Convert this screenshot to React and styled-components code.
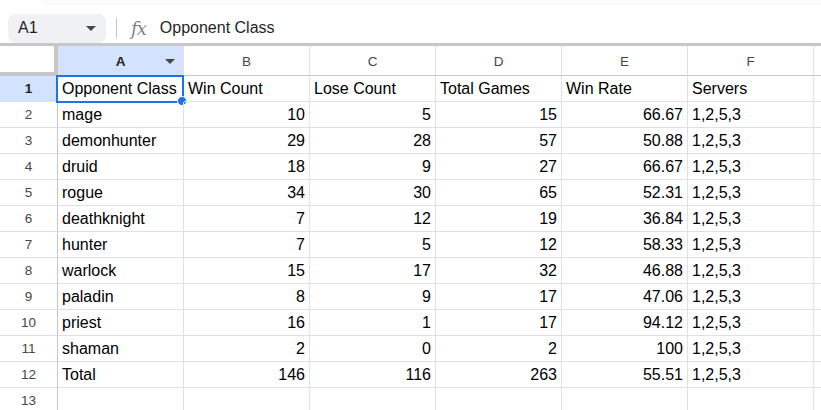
import React from 'react';
import styled, { createGlobalStyle } from 'styled-components';

const GlobalStyle = createGlobalStyle`
  html, body {
    margin: 0;
    padding: 0;
    background: #fff;
    overflow: hidden;
  }
  body {
    font-family: "Liberation Sans", Arial, sans-serif;
    color: #1f1f1f;
  }
`;

const COLS = ['A', 'B', 'C', 'D', 'E', 'F'];

const rows = [
  ['Opponent Class', 'Win Count', 'Lose Count', 'Total Games', 'Win Rate', 'Servers'],
  ['mage', 10, 5, 15, '66.67', '1,2,5,3'],
  ['demonhunter', 29, 28, 57, '50.88', '1,2,5,3'],
  ['druid', 18, 9, 27, '66.67', '1,2,5,3'],
  ['rogue', 34, 30, 65, '52.31', '1,2,5,3'],
  ['deathknight', 7, 12, 19, '36.84', '1,2,5,3'],
  ['hunter', 7, 5, 12, '58.33', '1,2,5,3'],
  ['warlock', 15, 17, 32, '46.88', '1,2,5,3'],
  ['paladin', 8, 9, 17, '47.06', '1,2,5,3'],
  ['priest', 16, 1, 17, '94.12', '1,2,5,3'],
  ['shaman', 2, 0, 2, '100', '1,2,5,3'],
  ['Total', 146, 116, 263, '55.51', '1,2,5,3'],
  ['', '', '', '', '', ''],
];

const Page = styled.div`
  width: 821px;
  height: 410px;
  display: flex;
  flex-direction: column;
  overflow: hidden;
  & > * {
    flex-shrink: 0;
  }
`;

const TopStrip = styled.div`
  height: 5px;
  margin-left: 40px;
  background: #f9fbfd;
  border-bottom-left-radius: 6px;
`;

const FormulaBar = styled.div`
  height: 30px;
  display: flex;
  align-items: center;
  padding: 8px 8px 0;
  border-bottom: 3px solid #c7c7c7;
  box-sizing: content-box;
`;

const NameBox = styled.div`
  width: 98px;
  height: 29px;
  border-radius: 8px;
  background: #eff1f4;
  display: flex;
  align-items: center;
  justify-content: space-between;
  padding: 0 10px;
  box-sizing: border-box;
  font-size: 16px;
`;

const Caret = styled.span`
  width: 0;
  height: 0;
  border-left: 5px solid transparent;
  border-right: 5px solid transparent;
  border-top: 5px solid #444746;
`;

const Divider = styled.div`
  width: 1px;
  height: 20px;
  margin: 0 14px 0 10px;
  background: #c4c7c5;
`;

const Fx = styled.span`
  font-family: "DejaVu Serif", "Liberation Serif", serif;
  font-style: italic;
  font-size: 18px;
  color: #7f8185;
  letter-spacing: -1px;
`;

const FormulaText = styled.span`
  font-size: 16px;
  margin-left: 14px;
`;

const Grid = styled.div`
  display: grid;
  grid-template-columns: 58px repeat(6, 126px) 1fr;
  grid-auto-rows: 26px;
  grid-template-rows: 30px;
  position: relative;
`;

const Corner = styled.div`
  background: #fff;
  border-right: 4px solid #c7c7c7;
  border-bottom: 4px solid #c7c7c7;
  box-sizing: border-box;
`;

const ColHead = styled.div`
  position: relative;
  display: flex;
  align-items: center;
  justify-content: center;
  font-size: 13.5px;
  color: ${p => (p.$active ? '#1f1f1f' : '#444746')};
  background: ${p => (p.$active ? '#d3e3fd' : '#fff')};
  font-weight: ${p => (p.$active ? 700 : 400)};
  border-right: 1px solid #e1e1e1;
  border-bottom: 1px solid #c4c7c5;
  box-sizing: border-box;
  padding-top: 2px;
`;

const HeadCaret = styled.span`
  position: absolute;
  right: 8px;
  top: 13px;
  width: 0;
  height: 0;
  border-left: 5px solid transparent;
  border-right: 5px solid transparent;
  border-top: 5px solid #444746;
`;

const RowHead = styled.div`
  display: flex;
  align-items: center;
  justify-content: center;
  font-size: 13.5px;
  color: ${p => (p.$active ? '#1f1f1f' : '#444746')};
  background: ${p => (p.$active ? '#d3e3fd' : '#fff')};
  font-weight: ${p => (p.$active ? 700 : 400)};
  border-right: 1px solid #c4c7c5;
  border-bottom: 1px solid #e1e1e1;
  box-sizing: border-box;
`;

const Cell = styled.div`
  position: relative;
  display: flex;
  align-items: flex-end;
  justify-content: ${p => (p.$num ? 'flex-end' : 'flex-start')};
  padding: 0 4px 3px;
  font-size: 16px;
  line-height: 18px;
  white-space: nowrap;
  color: #000;
  border-right: 1px solid #e1e1e1;
  border-bottom: 1px solid #e1e1e1;
  box-sizing: border-box;
`;

const Selection = styled.div`
  position: absolute;
  left: -2px;
  top: -1px;
  right: -1px;
  bottom: -2px;
  border: 2px solid #1a73e8;
  pointer-events: none;
`;

const Handle = styled.div`
  position: absolute;
  right: -5px;
  bottom: -5px;
  width: 8px;
  height: 8px;
  border-radius: 50%;
  background: #1a73e8;
  border: 1px solid #fff;
`;

export default function App() {
  return (
    <Page>
      <GlobalStyle />
      <TopStrip />
      <FormulaBar>
        <NameBox>
          <span>A1</span>
          <Caret />
        </NameBox>
        <Divider />
        <Fx>fx</Fx>
        <FormulaText>Opponent Class</FormulaText>
      </FormulaBar>
      <Grid>
        <Corner />
        {COLS.map(c => (
          <ColHead key={c} $active={c === 'A'}>
            {c}
            {c === 'A' && <HeadCaret />}
          </ColHead>
        ))}
        <ColHead />
        {rows.map((r, i) => (
          <React.Fragment key={i}>
            <RowHead $active={i === 0}>{i + 1}</RowHead>
            {r.map((v, j) => (
              <Cell key={j} $num={i > 0 && j > 0 && j < 5}>
                {v}
                {i === 0 && j === 0 && (
                  <Selection>
                    <Handle />
                  </Selection>
                )}
              </Cell>
            ))}
            <Cell />
          </React.Fragment>
        ))}
      </Grid>
    </Page>
  );
}
